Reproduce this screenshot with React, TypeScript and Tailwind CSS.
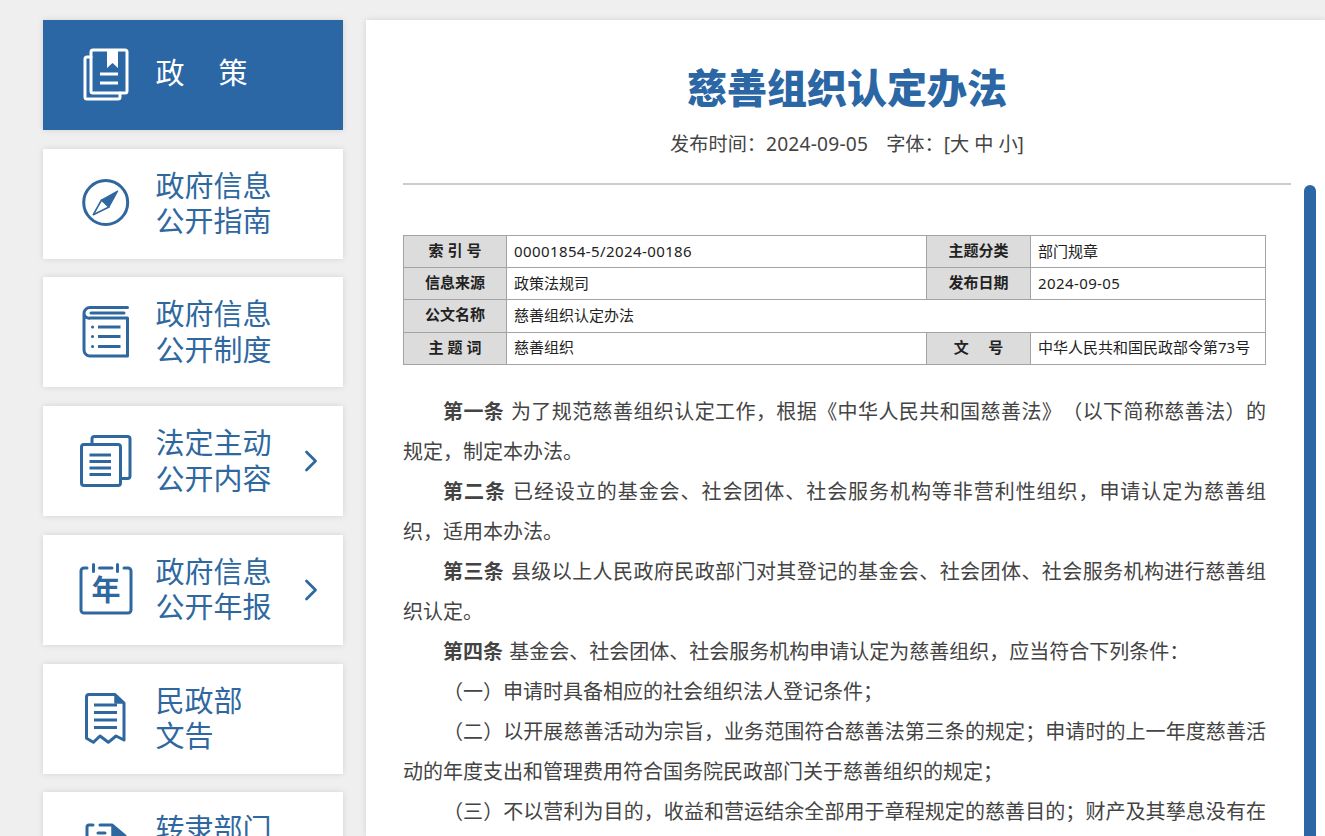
const Cn = "font-['Noto_Sans','Noto_Sans_CJK_SC',sans-serif]";

function Icon({ children, white }: { children: React.ReactNode; white?: boolean }) {
  return (
    <svg viewBox="0 0 60 60" className="h-[60px] w-[60px] shrink-0" fill="none" stroke={white ? "#ffffff" : "#2f689f"} strokeWidth={3} strokeLinecap="round" strokeLinejoin="round">
      {children}
    </svg>
  );
}

const icons: Record<string, React.ReactNode> = {
  policy: (
    <>
      <rect x="15" y="5" width="36" height="43" rx="2" />
      <path d="M15 12H11a2 2 0 0 0-2 2V52a2 2 0 0 0 2 2H42a2 2 0 0 0 2-2V48" />
      <path d="M31 5H42V23L36.5 18L31 23Z" fill="#ffffff" stroke="none" />
      <path d="M24 29H42M24 38H42" strokeLinecap="butt" />
    </>
  ),
  compass: (
    <>
      <circle cx="29.7" cy="28.5" r="22" />
      <path d="M41.7 17L25.5 26L33 33Z" fill="#2f689f" strokeWidth={1.2} />
      <path d="M17.3 40.7L25.5 26L33 33Z" strokeWidth={1.6} />
    </>
  ),
  regs: (
    <>
      <path d="M51.5 5.5H14a6 6 0 0 0-6 6V48a6 6 0 0 0 6 6H51.5V16H14a5 5 0 0 1-6-4" />
      <path d="M15 11H48" />
      <path d="M22 25H44.5M22 34.5H44.5M22 44.5H44.5" strokeLinecap="butt" />
      <path d="M16.5 25h.1M16.5 34.5h.1M16.5 44.5h.1" />
    </>
  ),
  docs: (
    <>
      <rect x="5.5" y="13.5" width="39" height="41" rx="2.5" />
      <path d="M16 13.5V8a2.5 2.5 0 0 1 2.5-2.5H51.5A2.5 2.5 0 0 1 54 8V45a2.5 2.5 0 0 1-2.5 2.5H44.5" />
      <path d="M13.5 24H35M13.5 30.5H35M13.5 37H35M13.5 43.5H35" strokeLinecap="butt" strokeWidth={2.8} />
    </>
  ),
  year: (
    <>
      <path d="M11 8H8a3 3 0 0 0-3 3V50a3 3 0 0 0 3 3H52a3 3 0 0 0 3-3V11a3 3 0 0 0-3-3H48" />
      <path d="M17.5 4.5V11.5M23.5 8H36M41.5 4.5V11.5" />
      <text x="30" y="41" textAnchor="middle" fontSize="29" fontWeight="700" fill="#2f689f" stroke="none" fontFamily="'Noto Sans CJK SC',sans-serif">年</text>
    </>
  ),
  notice: (
    <>
      <path d="M39 5.5H13a2.5 2.5 0 0 0-2.5 2.5V49.3L17.3 53.3L24 47L32.3 53.3L40 47L48 51V14Z" />
      <path d="M39 5.5V14H48Z" fill="#2f689f" strokeWidth={1.5} />
      <path d="M18 16H41M18 23.5H41M18 31H41M18 38.5H41" strokeLinecap="butt" />
    </>
  ),
  transfer: (
    <>
      <path d="M17 8H13a2 2 0 0 0-2 2V24M24 8H36L49 19" />
      <path d="M36 8V19H49Z" fill="#2f689f" strokeWidth={1.5} />
      <path d="M22 16H29" />
    </>
  ),
};

const items = [
  { icon: "compass", a: "政府信息", b: "公开指南" },
  { icon: "regs", a: "政府信息", b: "公开制度" },
  { icon: "docs", a: "法定主动", b: "公开内容", arrow: true },
  { icon: "year", a: "政府信息", b: "公开年报", arrow: true },
  { icon: "notice", a: "民政部", b: "文告" },
  { icon: "transfer", a: "转隶部门", b: "公开内容" },
];

function Cell({ head, children, colSpan }: { head?: boolean; children: React.ReactNode; colSpan?: number }) {
  return (
    <td colSpan={colSpan} className={head ? "border border-[#a3a3a3] bg-[#dcdcdc] pb-[3px] text-center font-bold text-[#222222]" : "border border-[#a3a3a3] px-[7px] pb-[2px] text-[#222222]"}>
      {children}
    </td>
  );
}

function P({ children }: { children: React.ReactNode }) {
  return <p className="text-justify indent-[40px] [word-spacing:1px] [text-spacing-trim:space-all]">{children}</p>;
}

export default function App() {
  return (
    <div className={`flex h-[836px] items-start gap-[23px] overflow-hidden bg-[#efefef] pt-[20px] pl-[43px] ${Cn}`}>
      <nav className="flex w-[300px] shrink-0 flex-col gap-[18.72px]">
        <div className="flex h-[110px] items-center gap-[19.5px] bg-[#2b66a5] pl-[33px] text-[29px] leading-[35px] text-white shadow-[0_0_6px_rgba(0,0,0,0.12)]">
          <Icon white>{icons.policy}</Icon>
          <div className="flex gap-[34px] pb-[5px]">
            <span>政</span>
            <span>策</span>
          </div>
        </div>
        {items.map((it, i) => (
          <div key={i} className="flex h-[110px] shrink-0 items-center gap-[19.5px] bg-white pl-[33px] text-[29px] leading-[35.5px] text-[#2f689f] shadow-[0_0_6px_rgba(0,0,0,0.12)]">
            <Icon>{icons[it.icon]}</Icon>
            <div className="w-[120px] pb-[1px]">
              <div>{it.a}</div>
              <div>{it.b}</div>
            </div>
            {it.arrow && (
              <svg viewBox="0 0 14 22" className="ml-[9px] h-[22px] w-[14px]" fill="none" stroke="#2f689f" strokeWidth={2.8} strokeLinecap="round" strokeLinejoin="round">
                <path d="M2.5 2L11.5 11L2.5 20" />
              </svg>
            )}
          </div>
        ))}
      </nav>

      <main className="flex h-[816px] min-w-0 flex-1 bg-white pl-[37px] shadow-[0_0_6px_rgba(0,0,0,0.12)]">
        <div className="w-[888px] shrink-0">
          <h1 className="pt-[39px] text-center text-[40px] leading-[58px] font-black text-[#2b66a5]">慈善组织认定办法</h1>
          <div className="mt-[14px] border-b-2 border-[#cccccc] pb-[26px] text-center text-[19.2px] leading-[26px] text-[#444444]">
            发布时间：<span className="tracking-[0.2px]">2024-09-05</span>
            <span className="ml-[18px]">字体：[大 中 小]</span>
          </div>
          <table className="mt-[50px] w-[862px] table-fixed border-collapse text-[15px] leading-[20px]">
            <colgroup>
              <col className="w-[103px]" />
              <col className="w-[420px]" />
              <col className="w-[104px]" />
              <col className="w-[235px]" />
            </colgroup>
            <tbody>
              <tr className="h-[32px]">
                <Cell head>索 引 号</Cell>
                <Cell><span className="tracking-[0.4px]">00001854-5/2024-00186</span></Cell>
                <Cell head>主题分类</Cell>
                <Cell>部门规章</Cell>
              </tr>
              <tr className="h-[32px]">
                <Cell head>信息来源</Cell>
                <Cell>政策法规司</Cell>
                <Cell head>发布日期</Cell>
                <Cell><span className="tracking-[0.4px]">2024-09-05</span></Cell>
              </tr>
              <tr className="h-[32.5px]">
                <Cell head>公文名称</Cell>
                <Cell colSpan={3}>慈善组织认定办法</Cell>
              </tr>
              <tr className="h-[32px]">
                <Cell head>主 题 词</Cell>
                <Cell>慈善组织</Cell>
                <Cell head>文&nbsp;&nbsp;&nbsp;&nbsp;&nbsp;号</Cell>
                <Cell>中华人民共和国民政部令第73号</Cell>
              </tr>
            </tbody>
          </table>
          <div className="mt-[27px] w-[863px] text-[20px] leading-[40px] text-[#444444]">
            <P><b>第一条</b> 为了规范慈善组织认定工作，根据《中华人民共和国慈善法》（以下简称慈善法）的规定，制定本办法。</P>
            <P><b>第二条</b> 已经设立的基金会、社会团体、社会服务机构等非营利性组织，申请认定为慈善组织，适用本办法。</P>
            <P><b>第三条</b> 县级以上人民政府民政部门对其登记的基金会、社会团体、社会服务机构进行慈善组织认定。</P>
            <P><b>第四条</b> 基金会、社会团体、社会服务机构申请认定为慈善组织，应当符合下列条件：</P>
            <P>（一）申请时具备相应的社会组织法人登记条件；</P>
            <P>（二）以开展慈善活动为宗旨，业务范围符合慈善法第三条的规定；申请时的上一年度慈善活动的年度支出和管理费用符合国务院民政部门关于慈善组织的规定；</P>
            <P>（三）不以营利为目的，收益和营运结余全部用于章程规定的慈善目的；财产及其孳息没有在发起人、捐赠人或者本组织成员中分配；</P>
          </div>
        </div>
        <div className="mt-[165px] ml-[13px] h-[700px] w-[12px] shrink-0 rounded-t-[6px] bg-[#2b66a5]" />
      </main>
    </div>
  );
}
